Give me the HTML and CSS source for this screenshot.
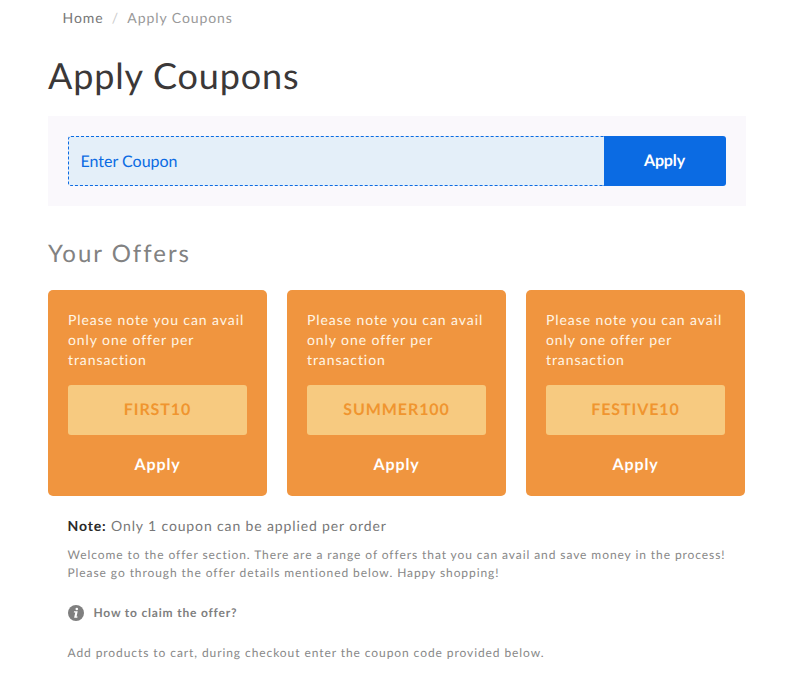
FILE: index.html
```html
<!DOCTYPE html>
<html lang="en">
<head>
    <meta charset="UTF-8">
    <meta name="viewport" content="width=device-width, initial-scale=1.0">
    <title>Apply Coupons</title>
    <link rel="stylesheet" href="styles.css">
</head>
<body>
    <div class="container">
        <ul class="breadcrumb">
            <li><a href="#">Home</a></li>
            <li class="active">Apply Coupons</li>
        </ul>
        <h1>Apply Coupons</h1>

        <form class="coupon-form">
            <input type="text" class="coupon-input" placeholder="Enter Coupon">
            <button type="submit" class="coupon-btn">Apply</button>
        </form>

        <h2>Your Offers</h2>
        <div class="offers">
            <div class="offer">
                <p>Please note you can avail only one offer per transaction</p>
                <div class="code">FIRST10</div>
                <button class="offer-btn">Apply</button>
            </div>
            <div class="offer">
                <p>Please note you can avail only one offer per transaction</p>
                <div class="code">SUMMER100</div>
                <button class="offer-btn">Apply</button>
            </div>
            <div class="offer">
                <p>Please note you can avail only one offer per transaction</p>
                <div class="code">FESTIVE10</div>
                <button class="offer-btn">Apply</button>
            </div>
        </div>

        <div class="info">
            <p class="note"><strong>Note:</strong> Only 1 coupon can be applied per order</p>
            <p class="welcome">Welcome to the offer section. There are a range of offers that you can avail and save money in the process! Please go through the offer details mentioned below. Happy shopping!</p>
            <h3>
                <svg class="info-icon" width="16" height="16" viewBox="0 0 16 16">
                    <circle cx="8" cy="8" r="8" fill="#7f7f7f"></circle>
                    <circle cx="8.8" cy="4" r="1.3" fill="#fff"></circle>
                    <path d="M6 6.3h3.7l-1.1 5.2h1l-.3 1.2H6.1l1.2-5.2H5.8z" fill="#fff"></path>
                </svg>
                How to claim the offer?
            </h3>
            <p class="claim">Add products to cart, during checkout enter the coupon code provided below.</p>
        </div>
    </div>
</body>
</html>
```

FILE: styles.css
```css
* {
  box-sizing: border-box;
}

body {
  margin: 0;
  background: #fff;
  color: #777;
  font-family: Lato, "Liberation Sans", sans-serif;
  font-size: 14px;
  line-height: 20px;
  letter-spacing: 0.92px;
  text-rendering: geometricPrecision;
}

.container {
  width: 698px;
  margin-left: 48px;
}

.breadcrumb {
  display: flex;
  margin: 0;
  padding: 8px 14.5px;
  list-style: none;
}

.breadcrumb a {
  color: #777;
  text-decoration: none;
}

.breadcrumb .active {
  color: #999;
}

.breadcrumb .active::before {
  content: "/";
  padding: 0 8.3px;
  color: #ccc;
}

h1 {
  margin: 19px 0 21px;
  color: #3b3838;
  font-size: 36px;
  font-weight: 400;
  line-height: 40px;
  letter-spacing: 0.84px;
}

.coupon-form {
  display: flex;
  padding: 20px;
  background: #faf8fc;
}

.coupon-input {
  flex: 1;
  height: 50px;
  padding: 1px 12px 0 11.5px;
  border: 1px dashed #0b6be3;
  border-right: none;
  border-radius: 3px 0 0 3px;
  background: #e4eff9;
  font-family: inherit;
  font-size: 16px;
  text-rendering: inherit;
}

.coupon-input::placeholder {
  color: #0b6be3;
}

.coupon-btn {
  width: 122px;
  height: 50px;
  padding: 0 7px 1px 6px;
  border: none;
  border-radius: 0 3px 3px 0;
  background: #0b6be3;
  color: #fff;
  font-family: inherit;
  font-size: 16px;
  font-weight: 700;
  letter-spacing: -0.1px;
  text-rendering: inherit;
}

h2 {
  margin: 34px 0 22px;
  color: #828282;
  font-size: 24px;
  font-weight: 400;
  line-height: 28px;
  letter-spacing: 2px;
}

.offers {
  display: grid;
  grid-template-columns: repeat(3, 219px);
  gap: 20px;
}

.offer {
  height: 206px;
  padding: 20px;
  border-radius: 5px;
  background: #f0953f;
  color: #fff;
  text-align: center;
}

.offer p {
  margin: 0 0 15px;
  color: #fff6e6;
  text-align: left;
}

.code {
  height: 50px;
  border-radius: 3px;
  background: #f7ca80;
  color: #f0952f;
  font-size: 16px;
  font-weight: 700;
  line-height: 50px;
}

.offer-btn {
  margin-top: 20px;
  padding: 0;
  border: none;
  background: none;
  color: #fff;
  font-family: inherit;
  font-size: 16px;
  font-weight: 700;
  line-height: 20px;
  letter-spacing: 0.9px;
  text-rendering: inherit;
}

.info {
  padding: 20px 19.5px 0;
}

.info p {
  margin: 0;
}

.note {
  letter-spacing: 0.87px;
}

.note strong {
  color: #2a2a2a;
}

.info .welcome {
  margin-top: 10px;
  color: #888;
  font-size: 12px;
  line-height: 18px;
  letter-spacing: 0.92px;
}

h3 {
  display: flex;
  align-items: center;
  gap: 10px;
  margin: 21px 0 20px;
  color: #7f7f7f;
  font-size: 12px;
  line-height: 20px;
  letter-spacing: 0.8px;
}

.info .claim {
  color: #888;
  font-size: 12px;
  letter-spacing: 0.92px;
}
```
